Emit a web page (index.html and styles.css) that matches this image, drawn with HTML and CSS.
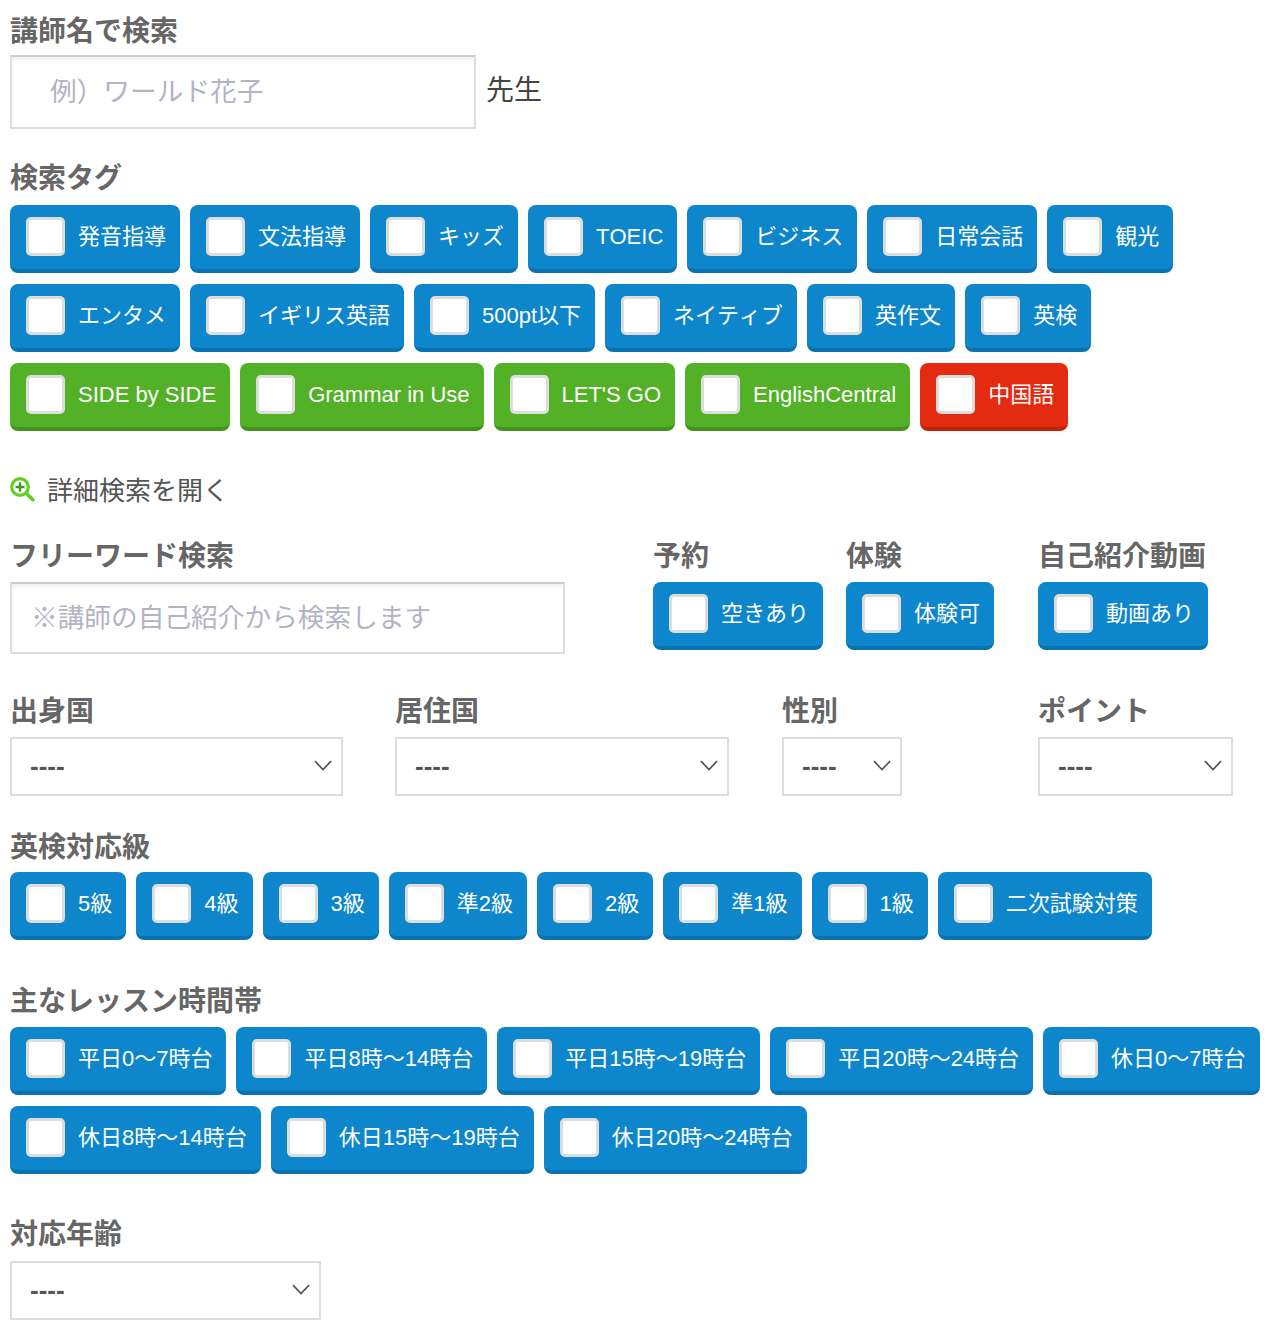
FILE: index.html
```html
<!DOCTYPE html>
<html lang="ja">
<head>
<meta charset="utf-8">
<title>講師検索</title>
<link rel="stylesheet" href="styles.css">
</head>
<body>
<form class="search">
  <section class="sec sec-name">
    <h2 class="ttl">講師名で検索</h2>
    <div class="name-row">
      <input class="txt txt-name" type="text" placeholder="例）ワールド花子">
      <span class="suffix">先生</span>
    </div>
  </section>

  <section class="sec sec-tags">
    <h2 class="ttl">検索タグ</h2>
    <div class="chips">
      <label class="chip"><input type="checkbox"><span>発音指導</span></label>
      <label class="chip"><input type="checkbox"><span>文法指導</span></label>
      <label class="chip"><input type="checkbox"><span>キッズ</span></label>
      <label class="chip"><input type="checkbox"><span>TOEIC</span></label>
      <label class="chip"><input type="checkbox"><span>ビジネス</span></label>
      <label class="chip"><input type="checkbox"><span>日常会話</span></label>
      <label class="chip"><input type="checkbox"><span>観光</span></label>
      <label class="chip"><input type="checkbox"><span>エンタメ</span></label>
      <label class="chip"><input type="checkbox"><span>イギリス英語</span></label>
      <label class="chip"><input type="checkbox"><span>500pt以下</span></label>
      <label class="chip"><input type="checkbox"><span>ネイティブ</span></label>
      <label class="chip"><input type="checkbox"><span>英作文</span></label>
      <label class="chip"><input type="checkbox"><span>英検</span></label>
      <label class="chip green"><input type="checkbox"><span>SIDE by SIDE</span></label>
      <label class="chip green"><input type="checkbox"><span>Grammar in Use</span></label>
      <label class="chip green"><input type="checkbox"><span>LET'S GO</span></label>
      <label class="chip green"><input type="checkbox"><span>EnglishCentral</span></label>
      <label class="chip red"><input type="checkbox"><span>中国語</span></label>
    </div>
  </section>

  <div class="toggle">
    <svg class="toggle-icon" width="25" height="25" viewBox="0 0 25 25" aria-hidden="true">
      <circle cx="10" cy="10" r="8.3" fill="#fff" stroke="#5fd01f" stroke-width="3.2"/>
      <path d="M16.3 16.3 22.8 22.8" stroke="#5fd01f" stroke-width="3.6" stroke-linecap="round"/>
      <path d="M10 5.5v9M5.5 10h9" stroke="#3f9a1c" stroke-width="2.4"/>
    </svg>
    <span>詳細検索を開く</span>
  </div>

  <section class="sec sec-free">
    <div class="col col-free">
      <h2 class="ttl">フリーワード検索</h2>
      <input class="txt txt-free" type="text" placeholder="※講師の自己紹介から検索します">
    </div>
    <div class="col col-yoyaku">
      <h2 class="ttl">予約</h2>
      <label class="chip"><input type="checkbox"><span>空きあり</span></label>
    </div>
    <div class="col col-taiken">
      <h2 class="ttl">体験</h2>
      <label class="chip"><input type="checkbox"><span>体験可</span></label>
    </div>
    <div class="col">
      <h2 class="ttl">自己紹介動画</h2>
      <label class="chip"><input type="checkbox"><span>動画あり</span></label>
    </div>
  </section>

  <section class="sec sec-selects">
    <div class="col col-country">
      <h2 class="ttl">出身国</h2>
      <div class="sel sel-country"><select><option>----</option></select><svg class="chev" width="18" height="11" viewBox="0 0 18 11" aria-hidden="true"><path d="M1 1.2 9 9.5 17 1.2" fill="none" stroke="#555" stroke-width="1.7"/></svg></div>
    </div>
    <div class="col col-living">
      <h2 class="ttl">居住国</h2>
      <div class="sel sel-living"><select><option>----</option></select><svg class="chev" width="18" height="11" viewBox="0 0 18 11" aria-hidden="true"><path d="M1 1.2 9 9.5 17 1.2" fill="none" stroke="#555" stroke-width="1.7"/></svg></div>
    </div>
    <div class="col col-gender">
      <h2 class="ttl">性別</h2>
      <div class="sel sel-gender"><select><option>----</option></select><svg class="chev" width="18" height="11" viewBox="0 0 18 11" aria-hidden="true"><path d="M1 1.2 9 9.5 17 1.2" fill="none" stroke="#555" stroke-width="1.7"/></svg></div>
    </div>
    <div class="col">
      <h2 class="ttl">ポイント</h2>
      <div class="sel sel-point"><select><option>----</option></select><svg class="chev" width="18" height="11" viewBox="0 0 18 11" aria-hidden="true"><path d="M1 1.2 9 9.5 17 1.2" fill="none" stroke="#555" stroke-width="1.7"/></svg></div>
    </div>
  </section>

  <section class="sec sec-eiken">
    <h2 class="ttl">英検対応級</h2>
    <div class="chips">
      <label class="chip"><input type="checkbox"><span>5級</span></label>
      <label class="chip"><input type="checkbox"><span>4級</span></label>
      <label class="chip"><input type="checkbox"><span>3級</span></label>
      <label class="chip"><input type="checkbox"><span>準2級</span></label>
      <label class="chip"><input type="checkbox"><span>2級</span></label>
      <label class="chip"><input type="checkbox"><span>準1級</span></label>
      <label class="chip"><input type="checkbox"><span>1級</span></label>
      <label class="chip"><input type="checkbox"><span>二次試験対策</span></label>
    </div>
  </section>

  <section class="sec sec-time">
    <h2 class="ttl">主なレッスン時間帯</h2>
    <div class="chips">
      <label class="chip"><input type="checkbox"><span>平日0～7時台</span></label>
      <label class="chip"><input type="checkbox"><span>平日8時～14時台</span></label>
      <label class="chip"><input type="checkbox"><span>平日15時～19時台</span></label>
      <label class="chip"><input type="checkbox"><span>平日20時～24時台</span></label>
      <label class="chip"><input type="checkbox"><span>休日0～7時台</span></label>
      <label class="chip"><input type="checkbox"><span>休日8時～14時台</span></label>
      <label class="chip"><input type="checkbox"><span>休日15時～19時台</span></label>
      <label class="chip"><input type="checkbox"><span>休日20時～24時台</span></label>
    </div>
  </section>

  <section class="sec sec-age">
    <h2 class="ttl">対応年齢</h2>
    <div class="sel sel-age"><select><option>----</option></select><svg class="chev" width="18" height="11" viewBox="0 0 18 11" aria-hidden="true"><path d="M1 1.2 9 9.5 17 1.2" fill="none" stroke="#555" stroke-width="1.7"/></svg></div>
  </section>
</form>
</body>
</html>
```
FILE: styles.css
```css
* { box-sizing: border-box; }
html, body { margin: 0; padding: 0; background: #fff; }
body {
  height: 1332px;
  overflow: hidden;
  font-family: "Liberation Sans", "Noto Sans CJK JP", sans-serif;
  font-kerning: none;
  color: #555;
}
.search { padding: 10px 0 0 10px; }
.sec { display: block; }
.ttl {
  margin: 0 0 7px;
  height: 40px;
  font-size: 28px;
  line-height: 44px;
  font-weight: 700;
  color: #666;
}
.sec-name .ttl { margin-bottom: 5px; }
.name-row { display: flex; align-items: flex-start; }
.suffix { margin: 16px 0 0 10px; font-size: 28px; line-height: 40px; color: #444; }
.txt {
  display: block;
  padding: 0 20px;
  border: 2px solid #ddd;
  border-top-color: #ccc;
  border-radius: 0;
  background: #fff;
  box-shadow: inset 0 3px 3px rgba(0,0,0,.05);
  font-family: inherit;
  font-kerning: none;
  font-size: 26.7px;
  color: #555;
  outline: none;
}
.txt::placeholder { color: #b3b3c4; opacity: 1; }
.txt-name { width: 466px; height: 74px; padding-left: 38px; }
.txt-free { width: 555px; height: 72px; padding-left: 19px; }

.sec-tags { margin-top: 28px; }
.sec-tags .ttl { margin-bottom: 8px; }
.chips { display: flex; flex-wrap: wrap; gap: 11px 10px; }
.chip {
  display: inline-flex;
  align-items: flex-start;
  height: 68px;
  padding: 12px 14px 0 16px;
  border-bottom: 4px solid #0a72ae;
  border-radius: 8px;
  background: #0d86cb;
  color: #fff;
  font-size: 22px;
  line-height: 39px;
  white-space: nowrap;
}
.chip.green { background: #53b128; border-bottom-color: #43921f; }
.chip.red { background: #e22b10; border-bottom-color: #bf230c; }
.chip input {
  appearance: none;
  -webkit-appearance: none;
  flex: none;
  width: 39px;
  height: 39px;
  margin: 0 13px 0 0;
  border: 3px solid #ddd;
  border-radius: 5px;
  background: #fff;
}

.toggle { display: flex; align-items: center; height: 36px; margin-top: 39px; font-size: 26px; color: #555; }
.toggle-icon { flex: none; margin: 3px 12px 0 0; }

.sec-free { display: flex; margin-top: 29px; }
.col { flex: none; }
.col-free { width: 643px; }
.col-yoyaku { width: 193px; }
.col-taiken { width: 192px; }

.sec-selects { display: flex; margin-top: 36px; }
.col-country { width: 385px; }
.col-living { width: 387px; }
.col-gender { width: 256px; }

.sel { position: relative; height: 59px; }
.sel select {
  appearance: none;
  -webkit-appearance: none;
  display: block;
  width: 100%;
  height: 100%;
  padding: 0 0 2px 18px;
  border: 2px solid #ddd;
  border-radius: 0;
  background: #fff;
  font-family: inherit;
  font-size: 26px;
  font-weight: 700;
  color: #555;
}
.chev { position: absolute; right: 11px; top: 23px; pointer-events: none; }
.sel-country { width: 333px; }
.sel-living { width: 334px; }
.sel-gender { width: 120px; }
.sel-point { width: 195px; }
.sel-age { width: 311px; }

.sec-eiken { margin-top: 30px; }
.sec-eiken .ttl { margin-bottom: 6px; }
.sec-time { margin-top: 40px; }
.sec-age { margin-top: 39px; }
.sec-age .ttl { margin-bottom: 8px; }
```
